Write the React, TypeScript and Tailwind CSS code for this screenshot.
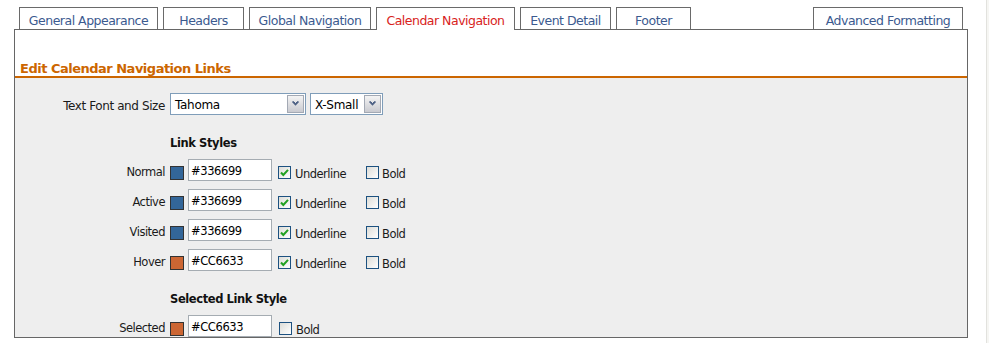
import React from "react";

const font = "font-['DejaVu_Sans',sans-serif]";

const tabs = [
  { label: "General Appearance", w: "w-[139px]" },
  { label: "Headers", w: "w-[81px]" },
  { label: "Global Navigation", w: "w-[122px]" },
  { label: "Calendar Navigation", w: "w-[139px]", active: true },
  { label: "Event Detail", w: "w-[91px]" },
  { label: "Footer", w: "w-[75px]" },
];

function Tab({ label, w, active }: { label: string; w: string; active?: boolean }) {
  return (
    <div
      className={`${w} ${
        active ? "h-[23px] bg-white text-[#d8231c] relative z-10 -mb-px" : "h-[22px] text-[#3b5a8f]"
      } border-t border-l border-r border-[#6a6a6a] text-center text-[12.5px] tracking-[-0.5px] leading-[21px] pt-[2px] whitespace-nowrap`}
    >
      {label}
    </div>
  );
}

function Check({ checked }: { checked?: boolean }) {
  return (
    <div className="w-[13px] h-[13px] border border-[#1c5180] bg-gradient-to-br from-[#dcdcd7] to-white flex items-center justify-center shrink-0">
      {checked && (
        <svg width="9" height="9" viewBox="0 0 9 9">
          <path d="M1 4.5 L3.3 7 L8 1.8" stroke="#21a121" strokeWidth="2" fill="none" />
        </svg>
      )}
    </div>
  );
}

function Chevron() {
  return (
    <svg width="9" height="8" viewBox="0 0 9 8">
      <path d="M1.5 1.5 L4.5 4.5 L7.5 1.5" stroke="#4d6185" strokeWidth="1.6" fill="none" />
      <path d="M2.5 1.5 L4.5 3.5 L6.5 1.5" stroke="#4d6185" strokeWidth="1" fill="none" />
    </svg>
  );
}

function Select({ value, w }: { value: string; w: string }) {
  return (
    <div className={`${w} h-[22px] border border-[#7f9db9] bg-white flex items-stretch`}>
      <div className="flex-1 pl-[4px] pt-[2px] text-[12px] tracking-[-0.3px] leading-[18px] text-black">{value}</div>
      <div className="w-[17px] m-px border border-[#a3a9b4] bg-gradient-to-b from-[#f4f4f4] to-[#c9cad0] flex items-center justify-center">
        <Chevron />
      </div>
    </div>
  );
}

const labelCls = "text-[11.5px] tracking-[-0.5px] text-[#1a1a1a]";

function ColorRow({
  label,
  color,
  value,
  underline = true,
  first,
}: {
  label: string;
  color: string;
  value: string;
  underline?: boolean;
  first?: boolean;
}) {
  return (
    <div className={`flex items-start h-[22px] ${first ? "mt-[10px]" : "mt-[8px]"}`}>
      <div className={`w-[150px] text-right leading-[22px] pt-[2px] ${labelCls}`}>{label}</div>
      <div className="ml-[5px] mt-[7px] w-[14px] h-[14px] border border-[#333]" style={{ backgroundColor: color }} />
      <div className="ml-[4px] w-[84px] h-[22px] border border-[#a5acb2] bg-white pl-[2px] pt-[2px] text-[11.5px] tracking-[-0.4px] leading-[18px] text-black">
        {value}
      </div>
      {underline ? (
        <>
          <div className="ml-[6px] w-[88px] flex items-start pt-[7px]">
            <Check checked />
            <span className={`ml-[4px] leading-[13px] mt-[2px] ${labelCls}`}>Underline</span>
          </div>
          <div className="flex items-start pt-[7px]">
            <Check />
            <span className={`ml-[3px] leading-[13px] mt-[2px] ${labelCls}`}>Bold</span>
          </div>
        </>
      ) : (
        <div className="ml-[7px] flex items-start pt-[7px]">
          <Check />
          <span className={`ml-[4px] leading-[13px] mt-[2px] ${labelCls}`}>Bold</span>
        </div>
      )}
    </div>
  );
}

function SubHead({ children }: { children: React.ReactNode }) {
  return (
    <div className="ml-[155px] mt-[19px] h-[15px] pt-[2px] text-[11.5px] font-bold tracking-[-0.4px] leading-[15px] text-[#111]">
      {children}
    </div>
  );
}

export default function App() {
  return (
    <div className={`${font} flex h-[343px] w-[989px] bg-white overflow-hidden`}>
      <div className="w-[986px] pt-[7px]">
        <div className="ml-[14px] w-[954px]">
          <div className="flex items-end gap-[5px] px-[5px]">
            {tabs.map((t) => (
              <Tab key={t.label} {...t} />
            ))}
            <div className="ml-auto">
              <Tab label="Advanced Formatting" w="w-[150px]" />
            </div>
          </div>
          <div className="border border-[#666] h-[309px] flex flex-col">
            <div className="h-[48px] flex items-end pl-[5px]">
              <div className="text-[13px] font-bold tracking-[-0.5px] leading-[14px] text-[#cc6600]">
                Edit Calendar Navigation Links
              </div>
            </div>
            <div className="h-[2px] bg-[#cc6600]" />
            <div className="flex-1 bg-[#eeeeee] pt-[15px]">
              <div className="flex items-start h-[22px]">
                <div className="w-[150px] text-right leading-[22px] pt-[2px] text-[12px] tracking-[-0.4px] text-[#1a1a1a]">
                  Text Font and Size
                </div>
                <div className="ml-[5px]">
                  <Select value="Tahoma" w="w-[136px]" />
                </div>
                <div className="ml-[4px]">
                  <Select value="X-Small" w="w-[73px]" />
                </div>
              </div>
              <SubHead>Link Styles</SubHead>
              <ColorRow first label="Normal" color="#336699" value="#336699" />
              <ColorRow label="Active" color="#336699" value="#336699" />
              <ColorRow label="Visited" color="#336699" value="#336699" />
              <ColorRow label="Hover" color="#CC6633" value="#CC6633" />
              <SubHead>Selected Link Style</SubHead>
              <ColorRow first label="Selected" color="#CC6633" value="#CC6633" underline={false} />
            </div>
          </div>
        </div>
      </div>
      <div className="w-px bg-[#e2e2de]" />
      <div className="flex-1 bg-[#f6f6f3]" />
    </div>
  );
}
